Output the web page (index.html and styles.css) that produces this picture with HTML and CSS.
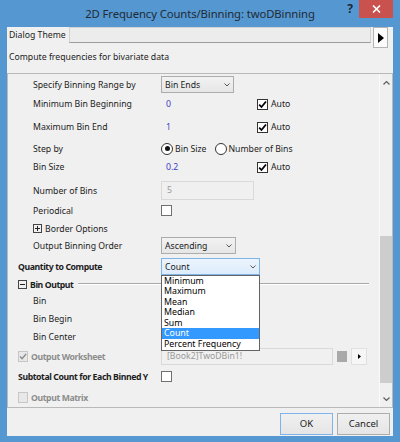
FILE: index.html
```html
<!DOCTYPE html>
<html>
<head>
<meta charset="utf-8">
<link rel="stylesheet" href="styles.css">
</head>
<body>
<div class="window">
  <div class="titlebar">
    <div class="title-spacer"></div>
    <div class="title">2D Frequency Counts/Binning: twoDBinning</div>
    <div class="help">?</div>
    <div class="close"><svg width="9" height="8" viewBox="0 0 9 8"><path d="M1 0.5 L8 7.5 M8 0.5 L1 7.5" stroke="#fff" stroke-width="1.6"/></svg></div>
  </div>
  <div class="client">
    <div class="theme-row">
      <span class="theme-label">Dialog Theme</span>
      <div class="theme-input"></div>
      <div class="theme-btn"><svg width="6" height="10" viewBox="0 0 6 10"><path d="M0 0 L6 5 L0 10 Z" fill="#000"/></svg></div>
    </div>
    <div class="desc">Compute frequencies for bivariate data</div>
    <div class="panel">
      <div class="panel-body">
        <div class="row indent">
          <span class="lbl">Specify Binning Range by</span>
          <div class="select w73"><span>Bin Ends</span><svg class="chev" width="6" height="4" viewBox="0 0 6 4"><path d="M0.5 0.5 L3 3 L5.5 0.5" fill="none" stroke="#555" stroke-width="1"/></svg></div>
        </div>
        <div class="row indent m3h">
          <span class="lbl">Minimum Bin Beginning</span>
          <span class="val">0</span>
          <span class="cb"><svg width="9" height="9" viewBox="0 0 9 9"><path d="M1.2 4.6 L3.5 7 L8 1.5" fill="none" stroke="#000" stroke-width="1.8"/></svg></span>
          <span class="auto">Auto</span>
        </div>
        <div class="row indent m7">
          <span class="lbl">Maximum Bin End</span>
          <span class="val">1</span>
          <span class="cb"><svg width="9" height="9" viewBox="0 0 9 9"><path d="M1.2 4.6 L3.5 7 L8 1.5" fill="none" stroke="#000" stroke-width="1.8"/></svg></span>
          <span class="auto">Auto</span>
        </div>
        <div class="row indent m5h">
          <span class="lbl">Step by</span>
          <span class="radio on"></span><span class="rlbl">Bin Size</span>
          <span class="radio r2"></span><span class="rlbl">Number of Bins</span>
        </div>
        <div class="row indent m2h">
          <span class="lbl">Bin Size</span>
          <span class="val">0.2</span>
          <span class="cb"><svg width="9" height="9" viewBox="0 0 9 9"><path d="M1.2 4.6 L3.5 7 L8 1.5" fill="none" stroke="#000" stroke-width="1.8"/></svg></span>
          <span class="auto">Auto</span>
        </div>
        <div class="row indent m7h">
          <span class="lbl">Number of Bins</span>
          <div class="dis-input w93">5</div>
        </div>
        <div class="row indent m4">
          <span class="lbl">Periodical</span>
          <span class="cb plain"></span>
        </div>
        <div class="row indent m2">
          <span class="lbl tree"><svg class="tree-ic" width="9" height="9" viewBox="0 0 9 9"><rect x="0.5" y="0.5" width="8" height="8" fill="none" stroke="#444"/><path d="M2 4.5 H7 M4.5 2 V7" stroke="#222"/></svg>Border Options</span>
        </div>
        <div class="row indent m1">
          <span class="lbl">Output Binning Order</span>
          <div class="select w75"><span>Ascending</span><svg class="chev" width="6" height="4" viewBox="0 0 6 4"><path d="M0.5 0.5 L3 3 L5.5 0.5" fill="none" stroke="#555" stroke-width="1"/></svg></div>
        </div>
        <div class="row m5">
          <span class="lbl bold">Quantity to Compute</span>
          <div class="select open w99"><span>Count</span><svg class="chev" width="6" height="4" viewBox="0 0 6 4"><path d="M0.5 0.5 L3 3 L5.5 0.5" fill="none" stroke="#555" stroke-width="1"/></svg>
            <ul class="dropdown">
              <li>Minimum</li>
              <li>Maximum</li>
              <li>Mean</li>
              <li>Median</li>
              <li>Sum</li>
              <li class="sel">Count</li>
              <li>Percent Frequency</li>
            </ul>
          </div>
        </div>
        <div class="row m2">
          <span class="group"><svg class="tree-ic" width="9" height="9" viewBox="0 0 9 9"><rect x="0.5" y="0.5" width="8" height="8" fill="none" stroke="#444"/><path d="M2 4.5 H7" stroke="#222"/></svg><b class="bold">Bin Output</b></span>
          <span class="sep"></span>
        </div>
        <div class="row indent">
          <span class="lbl">Bin</span>
        </div>
        <div class="row indent m2">
          <span class="lbl">Bin Begin</span>
        </div>
        <div class="row indent m2">
          <span class="lbl">Bin Center</span>
        </div>
        <div class="row m4">
          <span class="lbl bold disabled"><span class="cb dis"><svg width="9" height="9" viewBox="0 0 9 9"><path d="M1.2 4.6 L3.5 7 L8 1.5" fill="none" stroke="#8a8a8a" stroke-width="1.6"/></svg></span>Output Worksheet</span>
          <div class="dis-input w172">[Book2]TwoDBin1!</div>
          <span class="swatch"></span>
          <span class="mini-btn"><svg width="3" height="5" viewBox="0 0 3 5"><path d="M0 0 L3 2.5 L0 5 Z" fill="#000"/></svg></span>
        </div>
        <div class="row m4">
          <span class="lbl bold">Subtotal Count for Each Binned Y</span>
          <span class="cb plain"></span>
        </div>
        <div class="row m5">
          <span class="lbl bold disabled"><span class="cb dis"></span>Output Matrix</span>
        </div>
      </div>
      <div class="scrollbar">
        <div class="sb-arrow"><svg width="7" height="4" viewBox="0 0 7 4"><path d="M0.5 3.5 L3.5 0.5 L6.5 3.5" fill="none" stroke="#606060" stroke-width="1.2"/></svg></div>
        <div class="sb-track"><div class="sb-thumb"></div></div>
        <div class="sb-arrow"><svg width="7" height="4" viewBox="0 0 7 4"><path d="M0.5 0.5 L3.5 3.5 L6.5 0.5" fill="none" stroke="#606060" stroke-width="1.2"/></svg></div>
      </div>
    </div>
    <div class="buttons">
      <div class="btn default">OK</div>
      <div class="btn">Cancel</div>
    </div>
  </div>
</div>
</body>
</html>
```
FILE: styles.css
```css
* { box-sizing: border-box; margin: 0; padding: 0; }
html, body { width: 400px; height: 442px; overflow: hidden; }
body {
  font-family: "Noto Sans", "Open Sans", sans-serif;
  font-size: 8.7px;
  color: #1c1c1c;
}
.window {
  width: 400px;
  height: 442px;
  background: #5597d1;
  padding: 0 7px 6px 7px;
  display: flex;
  flex-direction: column;
}
.titlebar {
  height: 27px;
  flex: none;
  display: flex;
  align-items: flex-start;
}
.title-spacer { width: 52px; flex: none; }
.title {
  flex: 1;
  text-align: center;
  font-size: 11.3px;
  letter-spacing: -0.1px;
  line-height: 27px;
  color: #222b33;
  white-space: nowrap;
}
.help {
  width: 18px;
  flex: none;
  font-size: 12px;
  font-weight: bold;
  color: #1d2a38;
  line-height: 18px;
  text-align: center;
}
.close {
  width: 34px;
  height: 18px;
  flex: none;
  background: #c9514e;
  display: flex;
  align-items: center;
  justify-content: center;
}
.client {
  flex: 1;
  background: #f0f0f0;
  display: flex;
  flex-direction: column;
}
.theme-row {
  height: 21px;
  display: flex;
  align-items: flex-start;
  flex: none;
}
.theme-label {
  width: 62px;
  flex: none;
  padding-left: 2px;
  line-height: 16px;
  white-space: nowrap;
}
.theme-input {
  width: 302px;
  height: 16px;
  flex: none;
  background: #ececec;
  border: 1px solid #d2d2d2;
  border-bottom-color: #9c9c9c;
}
.theme-btn {
  width: 15px;
  height: 21px;
  flex: none;
  margin-left: 2px;
  background: #fbfbfb;
  border: 1px solid #b4b4b4;
  display: flex;
  align-items: center;
  justify-content: center;
}
.desc {
  margin-top: 2px;
  line-height: 14px;
  padding-left: 2px;
  flex: none;
}
.panel {
  margin-top: 9px;
  height: 335px;
  flex: none;
  border: 1px solid #b9b9b9;
  display: flex;
}
.panel-body {
  flex: 1;
  padding-top: 2.5px;
  display: flex;
  flex-direction: column;
}
.row {
  height: 16px;
  flex: none;
  display: flex;
  align-items: center;
  padding-left: 10px;
  white-space: nowrap;
}
.m1 { margin-top: 1px; }
.m2 { margin-top: 2px; }
.m2h { margin-top: 2.5px; }
.m3h { margin-top: 3.5px; }
.m4 { margin-top: 4px; }
.m5 { margin-top: 5px; }
.m5h { margin-top: 5.5px; }
.m7 { margin-top: 7px; }
.m7h { margin-top: 7.5px; }
.lbl {
  width: 143px;
  flex: none;
  display: flex;
  align-items: center;
}
.indent .lbl { padding-left: 15px; }
.bold { font-weight: bold; letter-spacing: -0.4px; }
.disabled { color: #8d8d8d; }
.tree-ic { margin-right: 3px; flex: none; }
.select {
  position: relative;
  height: 17px;
  flex: none;
  border: 1px solid #acacac;
  background: linear-gradient(#f2f2f2, #e6e6e6);
  display: flex;
  align-items: center;
  justify-content: space-between;
  padding: 0 3px 0 3px;
  color: #1c1c1c;
}
.w73 { width: 73px; }
.w75 { width: 75px; }
.w99 { width: 99px; }
.w93 { width: 93px; }
.w172 { width: 172px; }
.select.open {
  border-color: #7eb4ea;
  background: linear-gradient(#ecf4fc, #dcecfc);
}
.dropdown {
  position: absolute;
  left: -1px;
  top: 15.5px;
  width: 99px;
  list-style: none;
  background: #fff;
  border: 1px solid #646464;
  z-index: 5;
}
.dropdown li {
  line-height: 10.6px;
  height: 10.6px;
  padding-left: 2px;
  font-size: 8.8px;
  color: #000;
}
.dropdown li.sel { background: #3399ff; color: #fff; }
.val {
  width: 96px;
  flex: none;
  padding-left: 5px;
  color: #4141c6;
}
.cb {
  width: 11px;
  height: 11px;
  flex: none;
  border: 1px solid #333;
  background: #fff;
  display: flex;
  align-items: center;
  justify-content: center;
}
.cb.plain { border-color: #707070; }
.cb.dis {
  width: 10px;
  height: 11px;
  border-color: #c6c6c6;
  background: #e8e8e8;
  margin-right: 3px;
}
.auto { margin-left: 3px; }
.radio {
  width: 12px;
  height: 12px;
  flex: none;
  border: 1px solid #333;
  border-radius: 50%;
  background: #fff;
  display: flex;
  align-items: center;
  justify-content: center;
}
.radio.on::after {
  content: "";
  width: 5px;
  height: 5px;
  border-radius: 50%;
  background: #111;
}
.radio.r2 { margin-left: 8px; }
.rlbl { margin-left: 2px; }
.dis-input {
  height: 19px;
  flex: none;
  border: 1px solid #d9d9d9;
  background: #f0f0f0;
  color: #9a9a9a;
  padding-left: 5px;
  line-height: 17px;
}
.row .dis-input.w172 { height: 17px; line-height: 15px; }
.group {
  display: flex;
  align-items: center;
  flex: none;
}
.sep {
  flex: 1;
  margin: 0 10px 0 5px;
  border-top: 1px solid #a8a8a8;
  border-bottom: 1px solid #fff;
  height: 2px;
  position: relative;
  top: -1px;
}
.swatch {
  width: 10px;
  height: 11px;
  margin-left: 4px;
  background: #a9a9a9;
  flex: none;
}
.mini-btn {
  width: 16px;
  height: 17px;
  margin-left: 4px;
  flex: none;
  border: 1px solid #e0e0e0;
  background: #f6f6f6;
  display: flex;
  align-items: center;
  justify-content: center;
}
.scrollbar {
  width: 13px;
  flex: none;
  display: flex;
  flex-direction: column;
  border-left: 1px solid #fafafa;
}
.sb-arrow {
  height: 17px;
  flex: none;
  display: flex;
  align-items: center;
  justify-content: center;
}
.sb-track { flex: 1; }
.sb-thumb {
  margin-top: 145px;
  height: 147px;
  background: #cdcdcd;
}
.buttons {
  margin-top: 5px;
  display: flex;
  justify-content: flex-end;
  gap: 4px;
  padding-right: 3px;
  flex: none;
}
.btn {
  width: 53px;
  height: 22px;
  border: 1px solid #adadad;
  background: linear-gradient(#f0f0f0, #e5e5e5);
  text-align: center;
  line-height: 20px;
  font-size: 9.5px;
  color: #222;
}
.btn.default { border-color: #7eb4ea; }
```
